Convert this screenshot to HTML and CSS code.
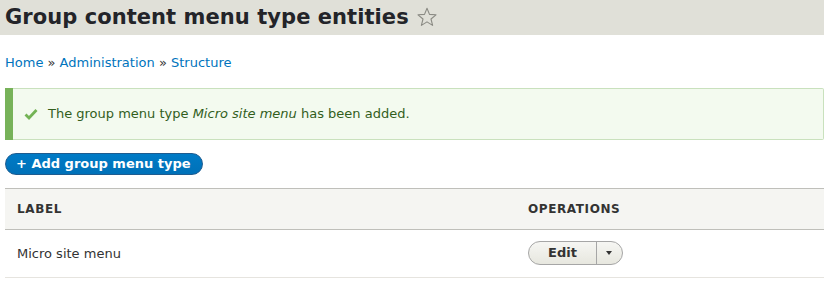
FILE: index.html
```html
<!DOCTYPE html>
<html>
<head>
<meta charset="utf-8">
<link rel="stylesheet" href="styles.css">
</head>
<body>
<header class="page-header">
  <h1 class="page-title">Group content menu type entities</h1>
  <svg class="star" width="20" height="20" viewBox="0 0 20 20"><path d="M10 1.3 L12.5 7.4 L19 7.8 L14 12 L15.6 18.4 L10 14.9 L4.4 18.4 L6 12 L1 7.8 L7.5 7.4 Z" fill="none" stroke="#8b8b84" stroke-width="1.1" stroke-linejoin="round"/></svg>
</header>
<main class="content">
  <nav class="breadcrumb"><a href="#">Home</a> » <a href="#">Administration</a> » <a href="#">Structure</a></nav>
  <div class="messages">
    <svg class="check" width="14" height="12" viewBox="0 0 14 12"><path d="M1.5 6.5 L5 10 L12.5 2" fill="none" stroke="#73b355" stroke-width="2.8"/></svg>
    <span>The group menu type <em>Micro site menu</em> has been added.</span>
  </div>
  <div class="actions"><a href="#" class="button-action">+ Add group menu type</a></div>
  <table class="list">
    <thead>
      <tr><th class="col-label">Label</th><th>Operations</th></tr>
    </thead>
    <tbody>
      <tr>
        <td>Micro site menu</td>
        <td class="ops">
          <div class="dropbutton"><a href="#" class="drop-main">Edit</a><span class="drop-toggle"><span class="arrow"></span></span></div>
        </td>
      </tr>
    </tbody>
  </table>
</main>
</body>
</html>
```
FILE: styles.css
```css
html, body {
  margin: 0;
  padding: 0;
  background: #fff;
  font-family: "DejaVu Sans", sans-serif;
  font-size: 13px;
  color: #333;
}
.page-header {
  background: #e0e0d8;
  height: 35px;
  display: flex;
  align-items: center;
  padding-left: 5px;
}
.page-title {
  margin: 0;
  font-size: 21px;
  font-weight: bold;
  color: #232429;
  line-height: 35px;
  letter-spacing: 0.06px;
}
.star {
  margin-left: 8px;
  margin-top: -2px;
}
.content {
  padding-left: 5px;
}
.breadcrumb {
  padding-top: 18px;
  line-height: 19px;
  height: 19px;
  color: #333;
}
.breadcrumb a {
  color: #0074bd;
  text-decoration: none;
}
.messages {
  margin-top: 16px;
  margin-left: 8px;
  box-shadow: -8px 0 0 #77b259;
  background: #f3faef;
  border: 1px solid #c9e1bd;
  border-left: 0;
  border-radius: 0 2px 2px 0;
  color: #325e1c;
  padding: 15px 20px 16px 35px;
  line-height: 19px;
  position: relative;
  display: flex;
  align-items: center;
}
.check {
  position: absolute;
  left: 11px;
  top: 19px;
}
.actions {
  margin-top: 13px;
  display: flex;
}
.button-action {
  display: inline-block;
  background: linear-gradient(to bottom, #007bc6, #0071b8);
  border: 1px solid #1e5c90;
  color: #fff;
  font-weight: bold;
  text-decoration: none;
  border-radius: 20em;
  padding: 1px 11px 1px 10px;
  line-height: 18px;
  font-size: 13px;
}
.list {
  margin-top: 13px;
  width: 830px;
  border-collapse: collapse;
}
.list th {
  background: #f5f5f2;
  text-align: left;
  text-transform: uppercase;
  font-size: 12px;
  letter-spacing: 0.6px;
  font-weight: bold;
  color: #333;
  border-top: 1px solid #bfbfba;
  border-bottom: 1px solid #bfbfba;
  padding: 0 12px;
  height: 40px;
}
.list th.col-label {
  width: 487px;
}
.list td {
  padding: 0 12px;
  height: 47px;
  border-bottom: 1px solid #e6e4df;
  color: #333;
}
.list td.ops {
  padding-bottom: 2px;
  height: 45px;
}
.dropbutton {
  display: inline-flex;
  height: 24px;
  border: 1px solid #a6a6a6;
  border-radius: 20em;
  background: linear-gradient(to bottom, #f6f6f3, #e7e7df);
  box-sizing: border-box;
  width: 95px;
  vertical-align: middle;
}
.drop-main {
  width: 68px;
  display: flex;
  align-items: center;
  justify-content: center;
  font-weight: bold;
  color: #333;
  text-decoration: none;
  border-right: 1px solid #a6a6a6;
  box-sizing: border-box;
}
.drop-toggle {
  flex: 1;
  display: flex;
  align-items: center;
  justify-content: center;
}
.arrow {
  width: 0;
  height: 0;
  border-left: 3.5px solid transparent;
  border-right: 3.5px solid transparent;
  border-top: 4px solid #333;
  margin-right: 2px;
}
```
